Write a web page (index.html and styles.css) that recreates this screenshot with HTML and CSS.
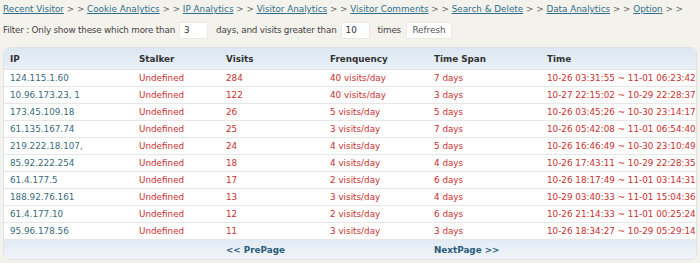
FILE: index.html
```html
<!DOCTYPE html>
<html>
<head>
<meta charset="utf-8">
<link rel="stylesheet" href="styles.css">
</head>
<body>
<div class="nav">
  <a href="#">Recent Visitor</a> &gt; &gt; <a href="#">Cookie Analytics</a> &gt; &gt; <a href="#">IP Analytics</a> &gt; &gt; <a href="#">Visitor Analytics</a> &gt; &gt; <a href="#">Visitor Comments</a> &gt; &gt; <a href="#">Search &amp; Delete</a> &gt; &gt; <a href="#">Data Analytics</a> &gt; &gt; <a href="#">Option</a> &gt; &gt;
</div>
<div class="filter">
  <span>Filter : Only show these which more than</span>
  <input class="num" type="text" value="3">
  <span>days, and visits greater than</span>
  <input class="num" type="text" value="10">
  <span>times</span>
  <button class="btn">Refresh</button>
</div>
<table class="grid">
  <thead>
    <tr><th class="c1">IP</th><th class="c2">Stalker</th><th class="c3">Visits</th><th class="c4">Frenquency</th><th class="c5">Time Span</th><th class="c6">Time</th></tr>
  </thead>
  <tbody>
    <tr><td class="ip">124.115.1.60</td><td>Undefined</td><td>284</td><td>40 visits/day</td><td>7 days</td><td>10-26 03:31:55 ~ 11-01 06:23:42</td></tr>
    <tr><td class="ip">10.96.173.23, 1</td><td>Undefined</td><td>122</td><td>40 visits/day</td><td>3 days</td><td>10-27 22:15:02 ~ 10-29 22:28:37</td></tr>
    <tr><td class="ip">173.45.109.18</td><td>Undefined</td><td>26</td><td>5 visits/day</td><td>5 days</td><td>10-26 03:45:26 ~ 10-30 23:14:17</td></tr>
    <tr><td class="ip">61.135.167.74</td><td>Undefined</td><td>25</td><td>3 visits/day</td><td>7 days</td><td>10-26 05:42:08 ~ 11-01 06:54:40</td></tr>
    <tr><td class="ip">219.222.18.107,</td><td>Undefined</td><td>24</td><td>4 visits/day</td><td>5 days</td><td>10-26 16:46:49 ~ 10-30 23:10:49</td></tr>
    <tr><td class="ip">85.92.222.254</td><td>Undefined</td><td>18</td><td>4 visits/day</td><td>4 days</td><td>10-26 17:43:11 ~ 10-29 22:28:35</td></tr>
    <tr><td class="ip">61.4.177.5</td><td>Undefined</td><td>17</td><td>2 visits/day</td><td>6 days</td><td>10-26 18:17:49 ~ 11-01 03:14:31</td></tr>
    <tr><td class="ip">188.92.76.161</td><td>Undefined</td><td>13</td><td>3 visits/day</td><td>4 days</td><td>10-29 03:40:33 ~ 11-01 15:04:36</td></tr>
    <tr><td class="ip">61.4.177.10</td><td>Undefined</td><td>12</td><td>2 visits/day</td><td>6 days</td><td>10-26 21:14:33 ~ 11-01 00:25:24</td></tr>
    <tr><td class="ip">95.96.178.56</td><td>Undefined</td><td>11</td><td>3 visits/day</td><td>3 days</td><td>10-26 18:34:27 ~ 10-29 05:29:14</td></tr>
  </tbody>
  <tfoot>
    <tr><td></td><td></td><td><a href="#">&lt;&lt; PrePage</a></td><td></td><td><a href="#">NextPage &gt;&gt;</a></td><td></td></tr>
  </tfoot>
</table>
</body>
</html>
```
FILE: styles.css
```css
html, body {
  margin: 0;
  padding: 0;
  background: #f4f2ec;
}
body {
  font-family: "DejaVu Sans", Verdana, sans-serif;
  font-size: 8.8px;
  color: #333;
  padding: 0 3px;
}
.nav {
  height: 18px;
  line-height: 18px;
  color: #666;
  white-space: nowrap;
}
.nav a {
  color: #2f6e8a;
  text-decoration: underline;
}
.filter {
  display: flex;
  align-items: center;
  height: 24px;
  color: #444;
  white-space: nowrap;
  letter-spacing: -0.2px;
}
.num {
  box-sizing: border-box;
  width: 29px;
  height: 17px;
  border: 1px solid #ebe9e3;
  background: #fff;
  font: 8.8px "DejaVu Sans", Verdana, sans-serif;
  color: #333;
  padding: 0 4px;
  margin: 0 8px 0 4px;
}
.btn {
  box-sizing: border-box;
  height: 17px;
  width: 46px;
  border: 1px solid #ebe9e3;
  background: #fff;
  font: 8.8px "DejaVu Sans", Verdana, sans-serif;
  color: #555;
  padding: 0;
  margin-left: 5px;
}
.grid {
  margin-top: 5px;
  width: 694px;
  table-layout: fixed;
  border-collapse: separate;
  border-spacing: 0;
  background: #fff;
  border: 1px solid #dfe3e8;
  border-radius: 6px;
  overflow: hidden;
}
.grid th {
  text-align: left;
  font-weight: bold;
  color: #333;
  height: 21px;
  padding: 0 0 0 6px;
  background: linear-gradient(#dce7f2, #eaf1f8);
  border-bottom: 1px solid #e1e6ec;
}
.grid td {
  height: 16px;
  padding: 0 0 0 6px;
  color: #c9302f;
  border-bottom: 1px solid #e7e7e7;
  white-space: nowrap;
}
.grid td.ip {
  color: #3a6b7c;
}
.grid tfoot td {
  height: 19px;
  border-bottom: none;
  background: linear-gradient(#e2ebf4, #f0f4f8);
}
.grid tfoot a {
  color: #2a5d78;
  font-weight: bold;
  text-decoration: none;
}
.c1 { width: 123px; }
.c2 { width: 81px; }
.c3 { width: 98px; }
.c4 { width: 98px; }
.c5 { width: 107px; }
.c6 { width: 149px; }
```
